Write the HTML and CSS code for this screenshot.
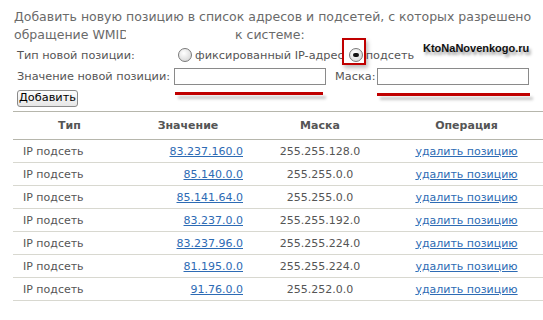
FILE: index.html
```html
<!DOCTYPE html>
<html lang="ru">
<head>
    <meta charset="UTF-8">
    <title>Доверенные адреса</title>
    <link rel="stylesheet" href="styles.css">
</head>
<body>

<div class="intro">
    Добавить новую позицию в список адресов и подсетей, с которых разрешено<br>
    <span class="cut">обращение WMID</span><span class="gap"></span>к системе:
</div>

<div class="form">
    <div class="form-row row-type">
        <span class="label">Тип новой позиции:</span>
        <span class="radios">
            <span class="radio"></span>
            <span class="radio-text">фиксированный IP-адрес</span>
            <span class="radio checked"></span>
            <span class="radio-text">подсеть</span>
        </span>
    </div>
    <div class="form-row row-value">
        <span class="label">Значение новой позиции:</span>
        <span class="inputs">
            <span class="field"></span>
            <span class="mask-label">Маска:</span>
            <span class="field"></span>
        </span>
    </div>
    <div class="form-row row-btn">
        <button class="btn-add">Добавить</button>
    </div>

    <div class="mark">KtoNaNovenkogo.ru</div>
    <div class="red-box"></div>
    <div class="red-line line-value"></div>
    <div class="red-line line-mask"></div>
</div>

<table class="list">
    <thead>
        <tr><th>Тип</th><th>Значение</th><th>Маска</th><th>Операция</th></tr>
    </thead>
    <tbody id="rows"></tbody>
</table>

<script>
    const rows = [
        ['83.237.160.0', '255.255.128.0'],
        ['85.140.0.0', '255.255.0.0'],
        ['85.141.64.0', '255.255.0.0'],
        ['83.237.0.0', '255.255.192.0'],
        ['83.237.96.0', '255.255.224.0'],
        ['81.195.0.0', '255.255.224.0'],
        ['91.76.0.0', '255.252.0.0']
    ];
    const tbody = document.getElementById('rows');
    rows.forEach(r => {
        tbody.innerHTML += `
            <tr>
                <td class="type">IP подсеть</td>
                <td class="value"><a href="#">${r[0]}</a></td>
                <td class="mask">${r[1]}</td>
                <td class="op"><a href="#">удалить позицию</a></td>
            </tr>
        `;
    });
</script>

</body>
</html>
```

FILE: styles.css
```css
body { font-family: "DejaVu Sans", Verdana, sans-serif; background-color: #fff; color: #555; margin: 0; padding: 0; overflow: hidden; }
.intro { font-size: 12.5px; line-height: 18px; color: #6a6a6a; padding: 8px 0 0 14px; white-space: nowrap; }
.cut { display: inline-block; width: 112px; overflow: hidden; vertical-align: top; white-space: nowrap; }
.gap { display: inline-block; width: 109px; }
.form { position: relative; padding: 0 0 0 17px; font-size: 11.3px; white-space: nowrap; }
.form-row { display: flex; align-items: center; }
.row-type { height: 22px; }
.row-value { height: 20px; }
.row-btn { height: 22px; }
.label { width: 157px; flex: none; color: #555; }
.radios { display: flex; align-items: center; gap: 3px; color: #555; }
.radio { width: 12px; height: 12px; border: 1px solid #7a7a7a; border-radius: 50%; background: radial-gradient(circle at 40% 35%, #fff 0%, #ddd 70%, #bbb 100%); margin-left: 4px; position: relative; }
.radio.checked::after { content: ""; position: absolute; left: 3px; top: 4px; width: 6px; height: 4px; border-radius: 2px; background: #111; }
.radio-text { color: #555; }
.radio-text + .radio { margin-left: 2px; }
.inputs { display: flex; align-items: center; }
.field { width: 150px; height: 15px; border: 1px solid #8a8a8a; background: #fff; }
.mask-label { margin: 0 2px 0 9px; }
.btn-add { font-family: "DejaVu Sans", Verdana, sans-serif; font-size: 11.3px; color: #000; padding: 0 1px; height: 17px; line-height: 14px; border: 1px solid #8a8a8a; border-radius: 3px; background: linear-gradient(#fdfdfd, #e6e6e6); margin-top: 2px; }
.mark { position: absolute; left: 423px; top: -2px; font-family: "Liberation Sans", Arial, sans-serif; font-weight: bold; font-size: 11px; color: #111; text-shadow: 2px 3px 3px #999; }
.red-box { position: absolute; left: 342px; top: -6px; width: 20px; height: 23px; border: 2px solid #c00000; box-shadow: 2px 3px 4px rgba(0, 0, 0, 0.25); }
.red-line { position: absolute; height: 3px; background: #c00000; box-shadow: 3px 4px 3px rgba(0, 0, 0, 0.22); }
.line-value { left: 175px; top: 48px; width: 148px; }
.line-mask { left: 377px; top: 49px; width: 153px; }
.list { border-collapse: collapse; margin: 3px 0 0 13px; width: 530px; font-size: 11px; table-layout: fixed; }
.list th { height: 27px; font-weight: bold; color: #555; border-top: 1px solid #b6b6ac; border-bottom: 1px solid #b6b6ac; text-align: center; padding: 0; }
.list th:nth-child(1) { width: 113px; }
.list th:nth-child(2) { width: 124px; }
.list th:nth-child(3) { width: 140px; }
.list th:nth-child(4) { width: 153px; }
.list td { height: 22px; border-bottom: 1px solid #d8d8d0; padding: 0; color: #555; }
.list a { color: #2d6bb4; }
.type { padding-left: 10px !important; }
.value { text-align: right; padding-right: 7px !important; }
.mask { text-align: center; }
.op { text-align: center; }
```
